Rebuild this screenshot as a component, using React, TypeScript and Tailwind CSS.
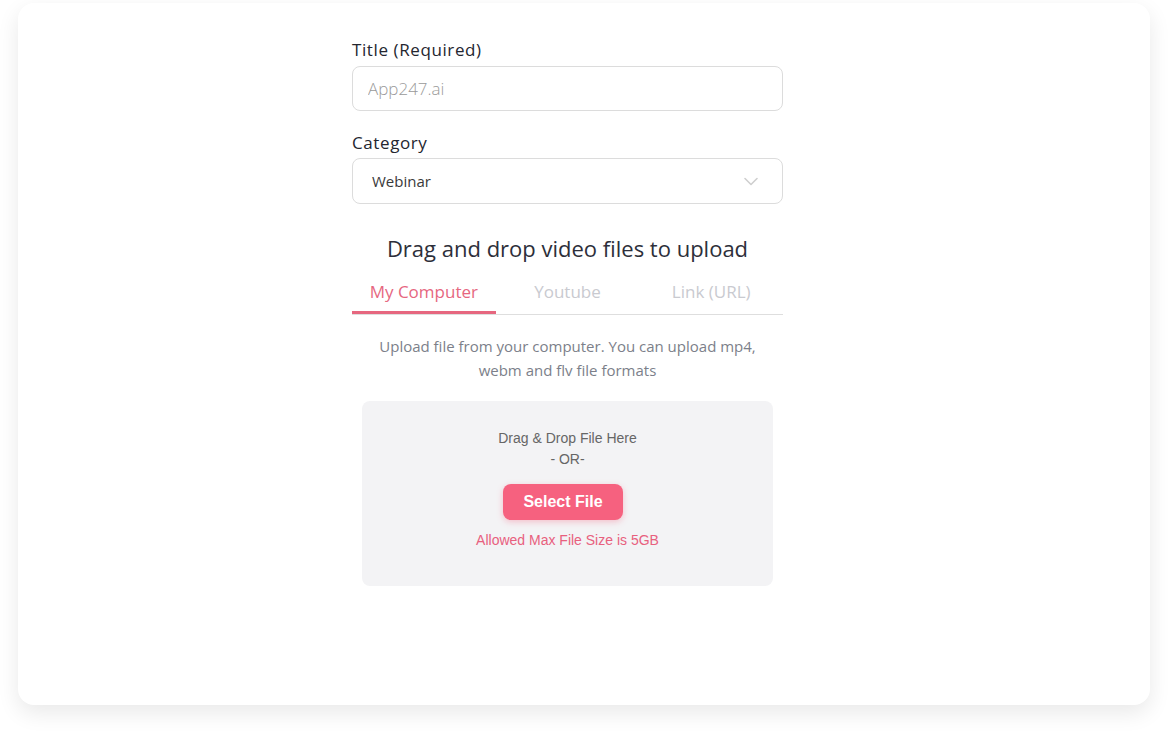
import { useState } from 'react';

const tabs = ['My Computer', 'Youtube', 'Link (URL)'];

export default function App() {
  const [active, setActive] = useState(0);

  return (
    <div className="min-h-[737px] w-full bg-white pt-[3px] px-[18px]">
      <div className="h-[702px] rounded-2xl bg-white shadow-[0_8px_22px_rgba(0,0,0,0.09)] pt-[35px]">
        <div className="ml-[334px] w-[431px] font-['Open_Sans','Lato',sans-serif]">
          {/* Title */}
          <label className="block text-[17px] leading-6 tracking-[0.6px] text-[#24262f]">Title (Required)</label>
          <input
            className="mt-1 h-[45px] w-full rounded-lg border border-[#dcdcdc] px-[15px] text-[17px] text-[#333] placeholder:text-[#9a9a9a] outline-none font-light"
            placeholder="App247.ai"
          />

          {/* Category */}
          <label className="mt-5 block text-[17px] leading-6 tracking-[0.6px] text-[#24262f]">Category</label>
          <div className="mt-[3px] flex h-[46px] w-full items-center justify-between rounded-lg border border-[#dcdcdc] pl-[19px] pr-6">
            <span className="text-[15px] text-[#3a3a3a]">Webinar</span>
            <svg width="14" height="9" viewBox="0 0 14 9" fill="none">
              <path d="M1 1.5l6 6 6-6" stroke="#cfcfcf" strokeWidth="1.6" strokeLinecap="round" strokeLinejoin="round" />
            </svg>
          </div>

          {/* Upload heading */}
          <h2 className="mt-[29px] text-center text-[22px] leading-[30px] text-[#2d2f3a]">
            Drag and drop video files to upload
          </h2>

          {/* Tabs */}
          <div className="mt-[17px] flex border-b border-[#dedede]">
            {tabs.map((tab, i) => (
              <button
                key={tab}
                onClick={() => setActive(i)}
                className={`flex h-[34px] flex-1 items-start justify-center text-[17px] leading-6 ${
                  i === active
                    ? 'border-b-[3px] border-[#e6677f] text-[#e6677f]'
                    : 'border-b-[3px] border-transparent text-[#c9cad0]'
                }`}
              >
                {tab}
              </button>
            ))}
          </div>

          <p className="mx-auto mt-[19px] w-[400px] text-center text-[15px] leading-6 text-[#7c7f8a]">
            Upload file from your computer. You can upload mp4, webm and flv file formats
          </p>

          {/* Drop zone */}
          <div className="mx-[10px] mt-[19px] flex h-[185px] flex-col items-center rounded-lg bg-[#f3f3f5] pt-[27px] font-['Liberation_Sans',Arial,sans-serif]">
            <p className="text-[14px] leading-[21px] text-[#666]">Drag &amp; Drop File Here</p>
            <p className="text-[14px] leading-[21px] text-[#666]">- OR-</p>
            <button className="mr-[9px] mt-[14px] h-9 w-[120px] rounded-lg bg-[#f6617f] text-[16px] font-bold text-white shadow-[0_2px_6px_rgba(246,97,127,0.35)]">
              Select File
            </button>
            <p className="mt-[10px] text-[14px] leading-5 text-[#e8607e]">Allowed Max File Size is 5GB</p>
          </div>
        </div>
      </div>
    </div>
  );
}
